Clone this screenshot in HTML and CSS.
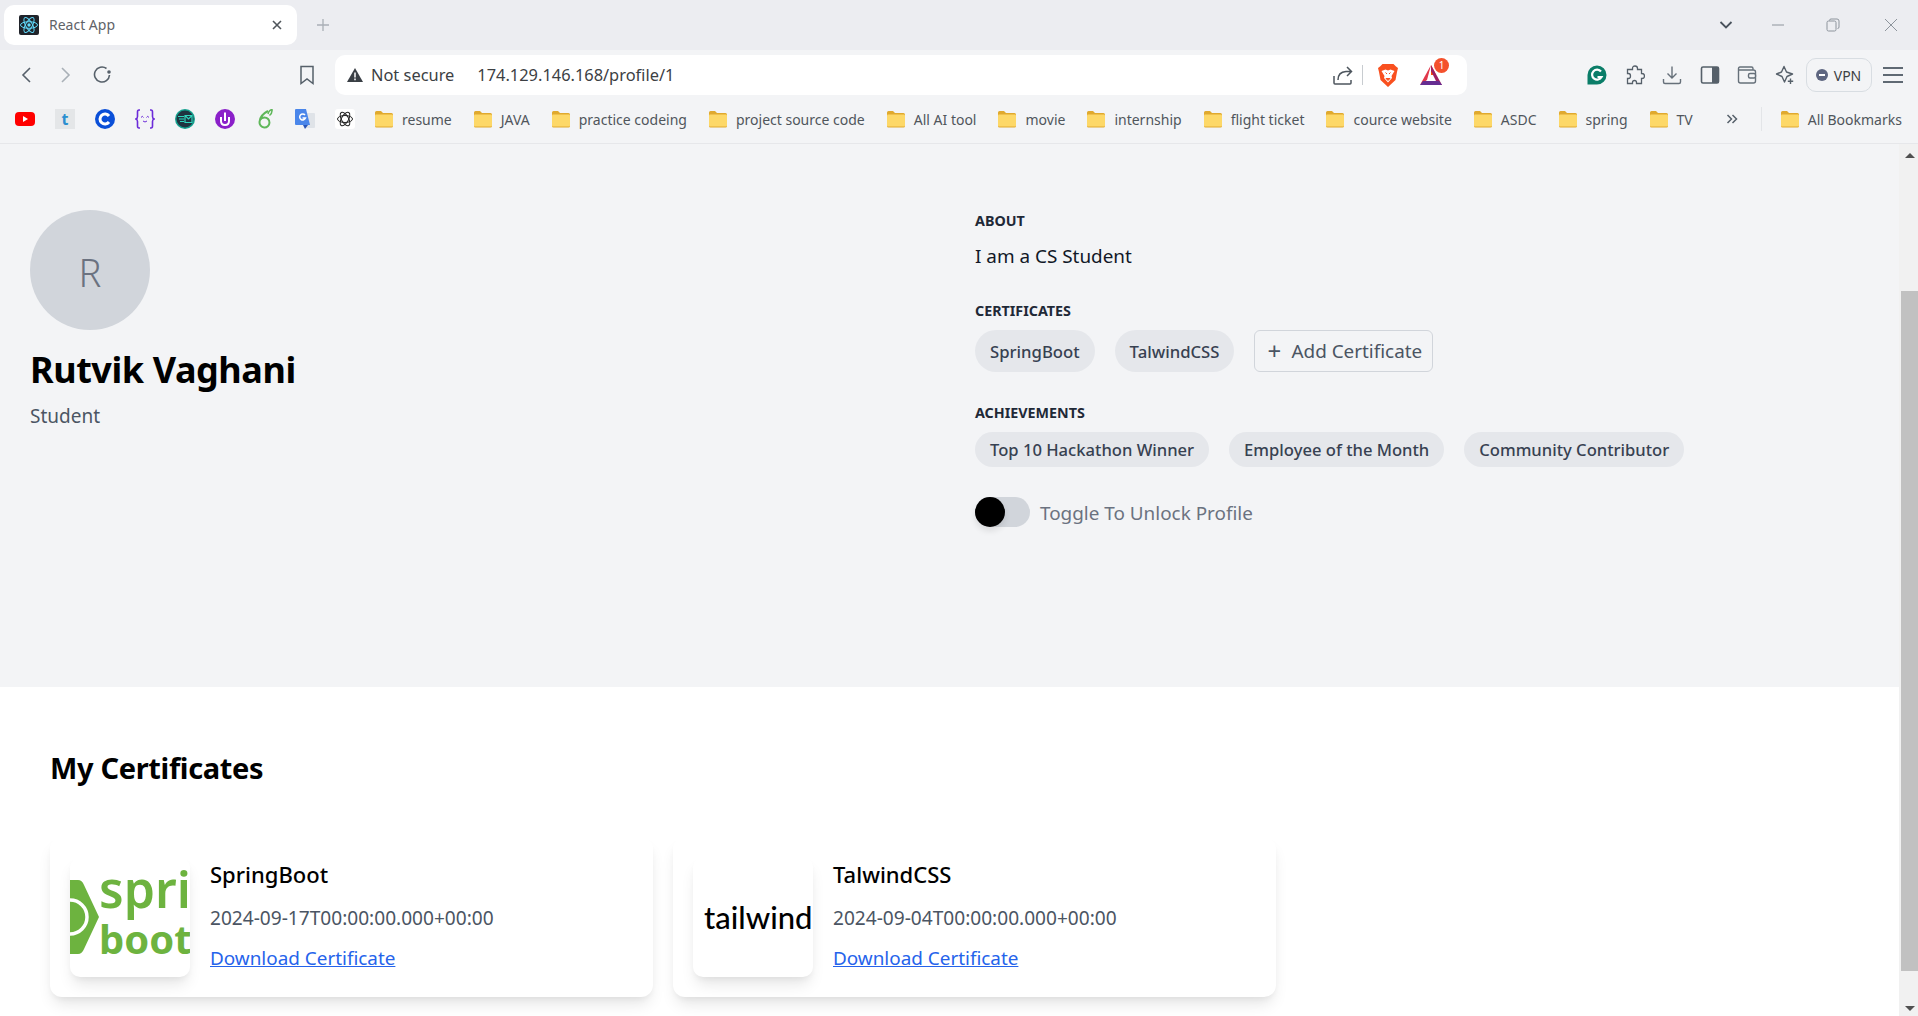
FILE: index.html
```html
<!DOCTYPE html>
<html lang="en">
<head>
    <meta charset="UTF-8">
    <title>React App</title>
    <link rel="stylesheet" href="styles.css">
</head>
<body>

    <svg class="defs" width="0" height="0">
        <symbol id="folder" viewBox="0 0 20 20">
            <path d="M1 3.5 Q1 2 2.5 2 H7 L9 4 H17.5 Q19 4 19 5.5 V17 Q19 18.500 17.500 18.500 H2.500 Q1 18.500 1 17 Z" fill="#e0a92e"/>
            <path d="M1 6.500 Q1 5.500 2 5.500 H18 Q19 5.500 19 6.500 V16.500 Q19 17.500 18 17.500 H2 Q1 17.500 1 16.500 Z" fill="#fdd868"/>
        </symbol>
    </svg>

    <!-- browser top -->
    <header class="browser">
        <div class="tabstrip">
            <div class="tab">
                <svg class="favicon" viewBox="0 0 20 20">
                    <rect width="20" height="20" rx="2" fill="#20232a"/>
                    <g fill="none" stroke="#61dafb" stroke-width="1">
                        <ellipse cx="10" cy="10" rx="8.500" ry="3.300"/>
                        <ellipse cx="10" cy="10" rx="8.500" ry="3.300" transform="rotate(60 10 10)"/>
                        <ellipse cx="10" cy="10" rx="8.500" ry="3.300" transform="rotate(120 10 10)"/>
                    </g>
                    <circle cx="10" cy="10" r="1.700" fill="#61dafb"/>
                </svg>
                <span class="tab-title">React App</span>
                <svg class="tab-close" viewBox="0 0 12 12"><path d="M2 2 L10 10 M10 2 L2 10" stroke="#50565c" stroke-width="1.600"/></svg>
            </div>
            <svg class="new-tab" viewBox="0 0 16 16"><path d="M8 2 V14 M2 8 H14" stroke="#a9afb6" stroke-width="1.300"/></svg>
            <div class="window-btns">
                <svg class="win-chevron" viewBox="0 0 14 10"><path d="M1.500 2 L7 7.500 L12.500 2" fill="none" stroke="#49525c" stroke-width="1.800"/></svg>
                <svg class="win-icon" viewBox="0 0 14 14"><path d="M1 7 H13" stroke="#8d949c" stroke-width="1"/></svg>
                <svg class="win-icon win-restore" viewBox="0 0 14 14"><path d="M3.500 2.500 Q3.500 1 5 1 H11 Q13 1 13 3 V9 Q13 10.500 11.500 10.500 M2.500 3 H8.500 Q10 3 10 4.500 V11.500 Q10 13 8.500 13 H2.500 Q1 13 1 11.500 V4.500 Q1 3 2.500 3 Z" fill="none" stroke="#8d949c" stroke-width="1"/></svg>
                <svg class="win-icon win-close" viewBox="0 0 14 14"><path d="M1 1 L13 13 M13 1 L1 13" stroke="#8d949c" stroke-width="1"/></svg>
            </div>
        </div>

        <div class="toolbar">
            <div class="nav-btns">
                <svg class="tool-icon" viewBox="0 0 20 20"><path d="M13 3 L6 10 L13 17" fill="none" stroke="#56606a" stroke-width="1.600"/></svg>
                <svg class="tool-icon" viewBox="0 0 20 20"><path d="M7 3 L14 10 L7 17" fill="none" stroke="#a9b0b7" stroke-width="1.600"/></svg>
                <svg class="tool-icon" viewBox="0 0 20 20"><path d="M16.500 10 A7.500 7.500 0 1 1 13.500 3.500" fill="none" stroke="#56606a" stroke-width="1.600"/><circle cx="16" cy="7" r="1.800" fill="#56606a"/></svg>
            </div>
            <svg class="bookmark-icon" viewBox="0 0 20 20"><path d="M4 1.500 H16 V18.500 L10 14 L4 18.500 Z" fill="none" stroke="#56606a" stroke-width="1.500"/></svg>
            <div class="addressbar">
                <svg class="warn-icon" viewBox="0 0 16 16"><path d="M8 1 L16 15 H0 Z" fill="#3a3f45"/><path d="M8 5.500 V10.500 M8 11.500 V13.300" stroke="#fff" stroke-width="1.500"/></svg>
                <span class="not-secure">Not secure</span>
                <span class="url">174.129.146.168/profile/1</span>
                <svg class="share-icon" viewBox="0 0 20 20"><path d="M1 11 V18 Q1 19 2 19 H17 Q18 19 18 18 V15" fill="none" stroke="#4d555d" stroke-width="1.500"/><path d="M5 15 Q5 7 13 6.500 H18 M14 2 L18.500 6.500 L14 11" fill="none" stroke="#4d555d" stroke-width="1.500"/></svg>
                <span class="addr-sep"></span>
                <svg class="brave-icon" viewBox="0 0 20 24">
                    <path d="M4.500 1 H15.500 L18 3.500 L20 5 L19 9 L17.500 17 L10 24 L2.500 17 L1 9 L0 5 L2 3.500 Z" fill="#f9501f"/>
                    <path d="M3.500 8 L7.500 6.500 L10 7.500 L12.500 6.500 L16.500 8 L13.500 13 L14 15 L10 19.500 L6 15 L6.500 13 Z" fill="#fff"/>
                    <path d="M7.500 9.500 L9 11 M12.500 9.500 L11 11 M8 15.500 H12 L10 17.500 Z" stroke="#f9501f" fill="#f9501f"/>
                </svg>
                <div class="bat-wrap">
                    <svg class="bat-icon" viewBox="0 0 24 22">
                        <path d="M12 1 L17 11 L12 11 Z" fill="#ff5000"/>
                        <path d="M12 1 L1 21 L8 16 Z" fill="#e1384b"/>
                        <path d="M12 1 L23 21 H19 L12 7 Z" fill="#9e1f63"/>
                        <path d="M1 21 H23 L20 17 H4 Z" fill="#662d91"/>
                    </svg>
                    <span class="bat-badge">1</span>
                </div>
            </div>
            <div class="ext-icons">
                <svg class="tool-icon" viewBox="0 0 20 20"><path d="M10 0.500 A9.500 9.500 0 1 1 10 19.500 H0.500 V10 A9.500 9.500 0 0 1 10 0.500 Z" fill="#0a7d68"/><path d="M14 6.500 A5 5 0 1 0 14.500 12 H10.500" fill="none" stroke="#fff" stroke-width="2.200"/></svg>
                <svg class="tool-icon" viewBox="0 0 20 20"><path d="M7.500 3.500 Q7.500 1 10 1 Q12.500 1 12.500 3.500 V4.500 H16.500 V8.500 H17 Q19.500 8.500 19.500 11 Q19.500 13.500 17 13.500 H16.500 V18.500 H11.500 V17.500 Q11.500 15.500 9.500 15.500 Q7.500 15.500 7.500 17.500 V18.500 H2.500 V13.500 H3.500 Q5.500 13.500 5.500 11 Q5.500 8.500 3.500 8.500 H2.500 V4.500 H7.500 Z" fill="none" stroke="#56606a" stroke-width="1.300"/></svg>
                <svg class="tool-icon" viewBox="0 0 20 20"><path d="M10 1.500 V13 M5.500 8.500 L10 13 L14.500 8.500 M1.500 14 V17 Q1.500 18.500 3 18.500 H17 Q18.500 18.500 18.500 17 V14" fill="none" stroke="#66707a" stroke-width="1.400"/></svg>
                <svg class="tool-icon" viewBox="0 0 20 20"><rect x="1.500" y="2" width="17" height="16" rx="1.500" fill="none" stroke="#56606a" stroke-width="1.600"/><rect x="12" y="2" width="6.500" height="16" fill="#56606a"/></svg>
                <svg class="tool-icon" viewBox="0 0 20 20"><path d="M16 5 V3.500 Q16 2 14.500 2 H3 Q1.500 2 1.500 3.500 V16 Q1.500 18 3.500 18 H16.500 Q18.500 18 18.500 16 V7 Q18.500 5 16.500 5 H2" fill="none" stroke="#66707a" stroke-width="1.400"/><rect x="11.500" y="8.500" width="7" height="4.500" rx="1.500" fill="#f3f4f6" stroke="#66707a" stroke-width="1.400"/></svg>
                <svg class="tool-icon" viewBox="0 0 20 20"><path d="M9 1.500 L11.500 7 L17.500 9 L12 11.500 L9.500 17 L7 11.500 L1.500 9 L6.500 7 Z" fill="none" stroke="#56606a" stroke-width="1.400" stroke-linejoin="round"/><path d="M15.500 13.500 V19 M12.800 16.300 H18.200" stroke="#56606a" stroke-width="1.400"/></svg>
            </div>
            <div class="vpn-btn"><span class="vpn-dot"></span><span>VPN</span></div>
            <div class="hamburger"><span></span><span></span><span></span></div>
        </div>

        <div class="bookmarks">
            <div class="apps">
                <span class="app"><svg viewBox="0 0 20 20"><rect y="3" width="20" height="14" rx="4" fill="#f00"/><path d="M8 7 L13 10 L8 13 Z" fill="#fff"/></svg></span>
                <span class="app"><span class="app-t">t</span></span>
                <span class="app"><svg viewBox="0 0 20 20"><circle cx="10" cy="10" r="10" fill="#0a4fd8"/><path d="M14 7 A5 5 0 1 0 14 13" fill="none" stroke="#fff" stroke-width="3"/></svg></span>
                <span class="app"><svg viewBox="0 0 20 20"><g fill="none" stroke="#6c2bd9" stroke-width="1.600"><path d="M5 1 H4 Q2.500 1 2.500 3 V7.500 Q2.500 9.500 0.800 10 Q2.500 10.500 2.500 12.500 V17 Q2.500 19 4 19 H5"/><path d="M15 1 H16 Q17.500 1 17.500 3 V7.500 Q17.500 9.500 19.200 10 Q17.500 10.500 17.500 12.500 V17 Q17.500 19 16 19 H15"/><path d="M6 8.500 L7.300 7.300 L8.500 8.500 M11.500 8.500 L12.700 7.300 L14 8.500" stroke-width="1"/><path d="M8 12 Q10 14 12 12" stroke-width="1"/></g></svg></span>
                <span class="app"><svg viewBox="0 0 20 20"><circle cx="10" cy="10" r="10" fill="#13a08e"/><circle cx="10" cy="10" r="8.500" fill="#1f3440"/><path d="M3 7.500 H9 M4 10 H9 M5 12.500 H9" stroke="#2fd6bd" stroke-width="1.200"/><path d="M10 6.500 H17 V13.500 H10 Z M10 6.500 L13.500 10 L17 6.500" fill="none" stroke="#2fd6bd" stroke-width="1.200"/></svg></span>
                <span class="app"><svg viewBox="0 0 20 20"><circle cx="10" cy="10" r="10" fill="#8a1fc9"/><path d="M6 8 V12 Q6 16 10 16 Q14 16 14 12 V8 M10 3.500 V12" fill="none" stroke="#fff" stroke-width="2"/></svg></span>
                <span class="app"><svg viewBox="0 0 20 20"><path d="M13 2 Q5 6 4.500 13 A5 5 0 1 0 9.500 8.500 Q6.500 8.500 5 11" fill="none" stroke="#5fb75a" stroke-width="2"/><path d="M13 5 Q14 1 17 0.500 Q17.500 4 14.500 6.500" fill="none" stroke="#5fb75a" stroke-width="1.500"/></svg></span>
                <span class="app"><svg viewBox="0 0 20 20"><path d="M8 4 H19 Q20 4 20 5 V18 Q20 19 19 19 H10 Z" fill="#dfe3e8"/><path d="M1 0 H11 L15 16 H1 Q0 16 0 15 V1 Q0 0 1 0 Z" fill="#4a86ea"/><path d="M8 16 L10 20 L13 16 Z" fill="#2a56b8"/><path d="M10 6 A3 3 0 1 0 10.500 9 H7.500" fill="none" stroke="#fff" stroke-width="1.500"/></svg></span>
                <span class="app app-gpt"><svg viewBox="0 0 20 20"><g fill="none" stroke="#222" stroke-width="1"><ellipse cx="10" cy="10" rx="7.500" ry="3.500"/><ellipse cx="10" cy="10" rx="7.500" ry="3.500" transform="rotate(60 10 10)"/><ellipse cx="10" cy="10" rx="7.500" ry="3.500" transform="rotate(120 10 10)"/></g></svg></span>
            </div>
            <div class="folders">
                <a class="folder"><svg class="folder-icon"><use href="#folder"/></svg>resume</a>
                <a class="folder"><svg class="folder-icon"><use href="#folder"/></svg>JAVA</a>
                <a class="folder"><svg class="folder-icon"><use href="#folder"/></svg>practice codeing</a>
                <a class="folder"><svg class="folder-icon"><use href="#folder"/></svg>project source code</a>
                <a class="folder"><svg class="folder-icon"><use href="#folder"/></svg>All AI tool</a>
                <a class="folder"><svg class="folder-icon"><use href="#folder"/></svg>movie</a>
                <a class="folder"><svg class="folder-icon"><use href="#folder"/></svg>internship</a>
                <a class="folder"><svg class="folder-icon"><use href="#folder"/></svg>flight ticket</a>
                <a class="folder"><svg class="folder-icon"><use href="#folder"/></svg>cource website</a>
                <a class="folder"><svg class="folder-icon"><use href="#folder"/></svg>ASDC</a>
                <a class="folder"><svg class="folder-icon"><use href="#folder"/></svg>spring</a>
                <a class="folder"><svg class="folder-icon"><use href="#folder"/></svg>TV</a>
            </div>
            <svg class="more-icon" viewBox="0 0 12 12"><path d="M1.500 2 L5.500 6 L1.500 10 M6.500 2 L10.500 6 L6.500 10" fill="none" stroke="#56606a" stroke-width="1.500"/></svg>
            <span class="bm-sep"></span>
            <a class="folder"><svg class="folder-icon"><use href="#folder"/></svg>All Bookmarks</a>
        </div>
    </header>

    <div class="viewport">
        <main class="page">
            <section class="profile">
                <div class="profile-left">
                    <div class="avatar">R</div>
                    <h1 class="name">Rutvik Vaghani</h1>
                    <p class="role">Student</p>
                </div>
                <div class="profile-right">
                    <h2 class="label">ABOUT</h2>
                    <p class="about">I am a CS Student</p>

                    <h2 class="label label-cert">CERTIFICATES</h2>
                    <div class="chips">
                        <span class="chip chip-tall">SpringBoot</span>
                        <span class="chip chip-tall">TalwindCSS</span>
                        <button class="add-btn"><span class="plus">+</span>Add Certificate</button>
                    </div>

                    <h2 class="label label-ach">ACHIEVEMENTS</h2>
                    <div class="chips">
                        <span class="chip">Top 10 Hackathon Winner</span>
                        <span class="chip">Employee of the Month</span>
                        <span class="chip">Community Contributor</span>
                    </div>

                    <div class="toggle-row">
                        <span class="toggle"><span class="knob"></span></span>
                        <span class="toggle-text">Toggle To Unlock Profile</span>
                    </div>
                </div>
            </section>

            <section class="certs">
                <h2 class="certs-title">My Certificates</h2>
                <div class="cert-grid">
                    <article class="card">
                        <div class="card-img">
                            <svg class="logo" viewBox="0 0 120 120">
                                <path d="M0 23 H8 Q12 23 14 28 L29 60 L14 92 Q12 97 8 97 H0 Z" fill="#6db33f"/>
                                <path d="M0 43 A17 17 0 0 1 0 77" fill="none" stroke="#fff" stroke-width="3.500"/>
                                <text class="logo-spring" x="29" y="51">spri</text>
                                <text class="logo-boot" x="29" y="97">boot</text>
                            </svg>
                        </div>
                        <div class="card-body">
                            <h3 class="card-title">SpringBoot</h3>
                            <p class="card-date">2024-09-17T00:00:00.000+00:00</p>
                            <a class="card-link" href="#">Download Certificate</a>
                        </div>
                    </article>
                    <article class="card">
                        <div class="card-img">
                            <span class="logo-tailwind">tailwind</span>
                        </div>
                        <div class="card-body">
                            <h3 class="card-title">TalwindCSS</h3>
                            <p class="card-date">2024-09-04T00:00:00.000+00:00</p>
                            <a class="card-link" href="#">Download Certificate</a>
                        </div>
                    </article>
                </div>
            </section>
        </main>

        <div class="scrollbar">
            <span class="arrow-up"></span>
            <span class="thumb"></span>
            <span class="arrow-down"></span>
        </div>
    </div>

</body>
</html>
```

FILE: styles.css
```css
* {
    box-sizing: border-box;
}

html, body {
    margin: 0;
    height: 1016px;
    overflow: hidden;
}

body {
    font-family: "Noto Sans", sans-serif;
    background-color: #fff;
    color: #000;
}

.defs {
    position: absolute;
}

/* browser top */
.browser {
    height: 144px;
    background-color: #f3f4f6;
    border-bottom: 1px solid #e6e7ea;
}

.tabstrip {
    height: 50px;
    background-color: #ecedf1;
    display: flex;
    align-items: flex-start;
    padding: 5px 0 0 4px;
}

.tab {
    width: 293px;
    height: 40px;
    background-color: #fff;
    border-radius: 10px;
    display: flex;
    align-items: center;
    padding: 0 14px 0 15px;
}

.favicon {
    width: 20px;
    height: 20px;
    margin-right: 10px;
}

.tab-title {
    flex: 1;
    padding-bottom: 2px;
    font-size: 14px;
    color: #5f6368;
}

.tab-close {
    width: 12px;
    height: 12px;
}

.new-tab {
    width: 16px;
    height: 16px;
    margin: 12px 0 0 18px;
}

.window-btns {
    margin-left: auto;
    display: flex;
    align-items: center;
    height: 40px;
    padding-right: 20px;
}

.win-chevron {
    width: 14px;
    height: 10px;
    margin-right: 38px;
}

.win-icon {
    width: 14px;
    height: 14px;
}

.win-restore {
    margin-left: 41px;
}

.win-close {
    margin-left: 44px;
}

.toolbar {
    height: 50px;
    display: flex;
    align-items: center;
    padding-left: 8px;
}

.tool-icon {
    width: 20px;
    height: 20px;
}

.nav-btns {
    display: flex;
    gap: 18px;
    padding-left: 9px;
}

.bookmark-icon {
    width: 20px;
    height: 20px;
    margin-left: 184px;
}

.addressbar {
    width: 1132px;
    height: 40px;
    margin-left: 18px;
    background-color: #fff;
    border-radius: 10px;
    display: flex;
    align-items: center;
    padding-left: 12px;
}

.warn-icon {
    width: 16px;
    height: 16px;
}

.not-secure {
    margin-left: 8px;
    padding-bottom: 2px;
    font-size: 16.400px;
    color: #3c4043;
}

.url {
    margin-left: 23px;
    padding-bottom: 2px;
    flex: 1;
    font-size: 16.400px;
    color: #3c4043;
}

.share-icon {
    width: 20px;
    height: 20px;
}

.addr-sep {
    width: 1px;
    height: 20px;
    margin: 0 15px 0 9px;
    background-color: #c8ccd0;
}

.brave-icon {
    width: 20px;
    height: 24px;
}

.bat-wrap {
    position: relative;
    width: 24px;
    height: 22px;
    margin: 0 24px 0 21px;
}

.bat-icon {
    width: 24px;
    height: 22px;
}

.bat-badge {
    position: absolute;
    top: -6px;
    right: -6px;
    width: 15px;
    height: 15px;
    border-radius: 50%;
    background-color: #f4512c;
    color: #fff;
    font-size: 10px;
    line-height: 15px;
    text-align: center;
}

.ext-icons {
    display: flex;
    gap: 17.500px;
    margin-left: 120px;
}

.vpn-btn {
    width: 66px;
    height: 34px;
    margin-left: 11px;
    border: 1.500px solid #d8dde2;
    border-radius: 10px;
    display: flex;
    align-items: center;
    justify-content: center;
    gap: 6px;
    font-size: 14px;
    color: #3c4043;
}

.vpn-dot {
    width: 12px;
    height: 12px;
    border-radius: 50%;
    background-color: #5e6680;
    position: relative;
}

.vpn-dot::after {
    content: "";
    position: absolute;
    left: 3px;
    top: 5px;
    width: 6px;
    height: 2px;
    background-color: #fff;
}

.hamburger {
    width: 20px;
    margin-left: 11px;
    display: flex;
    flex-direction: column;
    gap: 5.500px;
}

.hamburger span {
    height: 1.500px;
    background-color: #5f6973;
}

.bookmarks {
    height: 43px;
    display: flex;
    align-items: center;
    padding: 0 0 5px 5px;
    font-size: 14px;
    color: #50565c;
}

.apps {
    display: flex;
    width: 369px;
}

.app {
    width: 40px;
    display: flex;
    justify-content: center;
    align-items: center;
}

.app svg {
    width: 20px;
    height: 20px;
}

.app-t {
    width: 20px;
    height: 20px;
    background-color: #e4e6e8;
    color: #2b8fd0;
    font-size: 16px;
    font-weight: 700;
    line-height: 20px;
    text-align: center;
}

.app-gpt svg {
    background-color: #fff;
    border-radius: 3px;
}

.folders {
    display: flex;
    gap: 21px;
}

.folder {
    display: flex;
    align-items: center;
    gap: 8px;
    white-space: nowrap;
}

.folder-icon {
    width: 20px;
    height: 20px;
}

.more-icon {
    width: 12px;
    height: 12px;
    margin-left: 33px;
}

.bm-sep {
    width: 1px;
    height: 24px;
    margin: 0 18px 0 23px;
    background-color: #e3e5e8;
}

/* page */
.viewport {
    height: 872px;
    display: flex;
}

.page {
    flex: 1;
    overflow: hidden;
}

.scrollbar {
    width: 19px;
    padding-left: 2px;
    background-color: #f1f1f1;
    display: flex;
    flex-direction: column;
    align-items: center;
}

.arrow-up {
    margin-top: 9px;
    border-left: 5px solid transparent;
    border-right: 5px solid transparent;
    border-bottom: 5px solid #505050;
}

.thumb {
    width: 17px;
    height: 680px;
    margin-top: 133px;
    background-color: #c1c1c1;
}

.arrow-down {
    margin-top: 35px;
    border-left: 5px solid transparent;
    border-right: 5px solid transparent;
    border-top: 5px solid #505050;
}

.profile {
    height: 543px;
    background-color: #f3f4f6;
    display: grid;
    grid-template-columns: 945px 1fr;
    padding: 66px 0 0 30px;
}

.avatar {
    width: 120px;
    height: 120px;
    padding-top: 4px;
    border-radius: 50%;
    background-color: #d1d5db;
    color: #6b7280;
    font-size: 38px;
    font-weight: 350;
    display: flex;
    align-items: center;
    justify-content: center;
}

.name {
    margin: 20px 0 0;
    font-size: 36px;
    line-height: 40px;
    font-weight: 700;
    letter-spacing: -0.430px;
}

.role {
    margin: 12px 0 0;
    font-size: 19px;
    line-height: 28px;
    color: #4b5563;
}

.profile-right {
    padding-top: 1px;
}

.label {
    margin: 0;
    font-size: 14.300px;
    line-height: 20px;
    font-weight: 700;
    color: #1f2937;
}

.about {
    margin: 11px 0 0;
    font-size: 18.900px;
    line-height: 28px;
    color: #111827;
}

.label-cert {
    margin-top: 31px;
}

.label-ach {
    margin-top: 31px;
}

.chips {
    display: flex;
    gap: 20px;
    margin-top: 9px;
}

.chip {
    height: 35px;
    padding: 0 15px;
    border-radius: 999px;
    background-color: #e5e7eb;
    color: #374151;
    font-size: 16.600px;
    font-weight: 500;
    line-height: 36px;
}

.chip-tall {
    height: 42px;
    font-size: 16.700px;
    line-height: 43px;
}

.add-btn {
    height: 42px;
    padding: 0 10px 0 12px;
    display: flex;
    align-items: center;
    background: transparent;
    border: 1px solid #d1d5db;
    border-radius: 6px;
    font-family: inherit;
    font-size: 18.900px;
    color: #4b5563;
}

.plus {
    width: 24px;
    font-size: 24px;
    line-height: 24px;
    text-align: left;
}

.toggle-row {
    display: flex;
    align-items: center;
    margin-top: 30px;
}

.toggle {
    width: 55px;
    height: 30px;
    border-radius: 15px;
    background-color: #d1d5db;
}

.knob {
    display: block;
    width: 30px;
    height: 30px;
    border-radius: 50%;
    background-color: #000;
    box-shadow: 0 4px 6px rgba(0,0,0,0.1);
}

.toggle-text {
    margin-left: 10px;
    padding-top: 2px;
    font-size: 18.900px;
    color: #6b7280;
}

.certs {
    height: 329px;
    background-color: #fff;
    padding: 63px 0 0 50px;
}

.certs-title {
    margin: 0;
    font-size: 29px;
    line-height: 36px;
    font-weight: 700;
    letter-spacing: -0.330px;
}

.cert-grid {
    display: grid;
    grid-template-columns: repeat(3, 603px);
    gap: 20px;
    margin-top: 51px;
}

.card {
    height: 160px;
    padding: 20px;
    border-radius: 12px;
    background-color: #fff;
    box-shadow: 0 10px 15px -3px rgba(0,0,0,0.1), 0 4px 6px -2px rgba(0,0,0,0.05);
    display: flex;
    gap: 20px;
}

.card-img {
    width: 120px;
    height: 120px;
    border-radius: 10px;
    background-color: #fff;
    box-shadow: 0 10px 15px -3px rgba(0,0,0,0.1), 0 4px 6px -2px rgba(0,0,0,0.05);
    overflow: hidden;
    display: flex;
    align-items: center;
}

.logo {
    width: 120px;
    height: 120px;
}

.logo-spring {
    font-family: "Noto Sans", sans-serif;
    font-size: 50px;
    font-weight: 600;
    fill: #6db33f;
}

.logo-boot {
    font-family: "Noto Sans", sans-serif;
    font-size: 40px;
    font-weight: 700;
    fill: #6db33f;
}

.logo-tailwind {
    margin-left: 11px;
    font-family: "Lato", sans-serif;
    font-size: 31px;
    font-weight: 500;
    color: #000;
}

.card-body {
    padding-top: 3px;
}

.card-title {
    margin: 0;
    font-size: 22px;
    line-height: 28px;
    font-weight: 500;
}

.card-date {
    margin: 16px 0 0;
    font-size: 19.100px;
    line-height: 28px;
    color: #4b5563;
}

.card-link {
    display: block;
    margin-top: 12px;
    font-size: 18.900px;
    line-height: 28px;
    color: #2563eb;
    text-decoration: underline;
}
```
